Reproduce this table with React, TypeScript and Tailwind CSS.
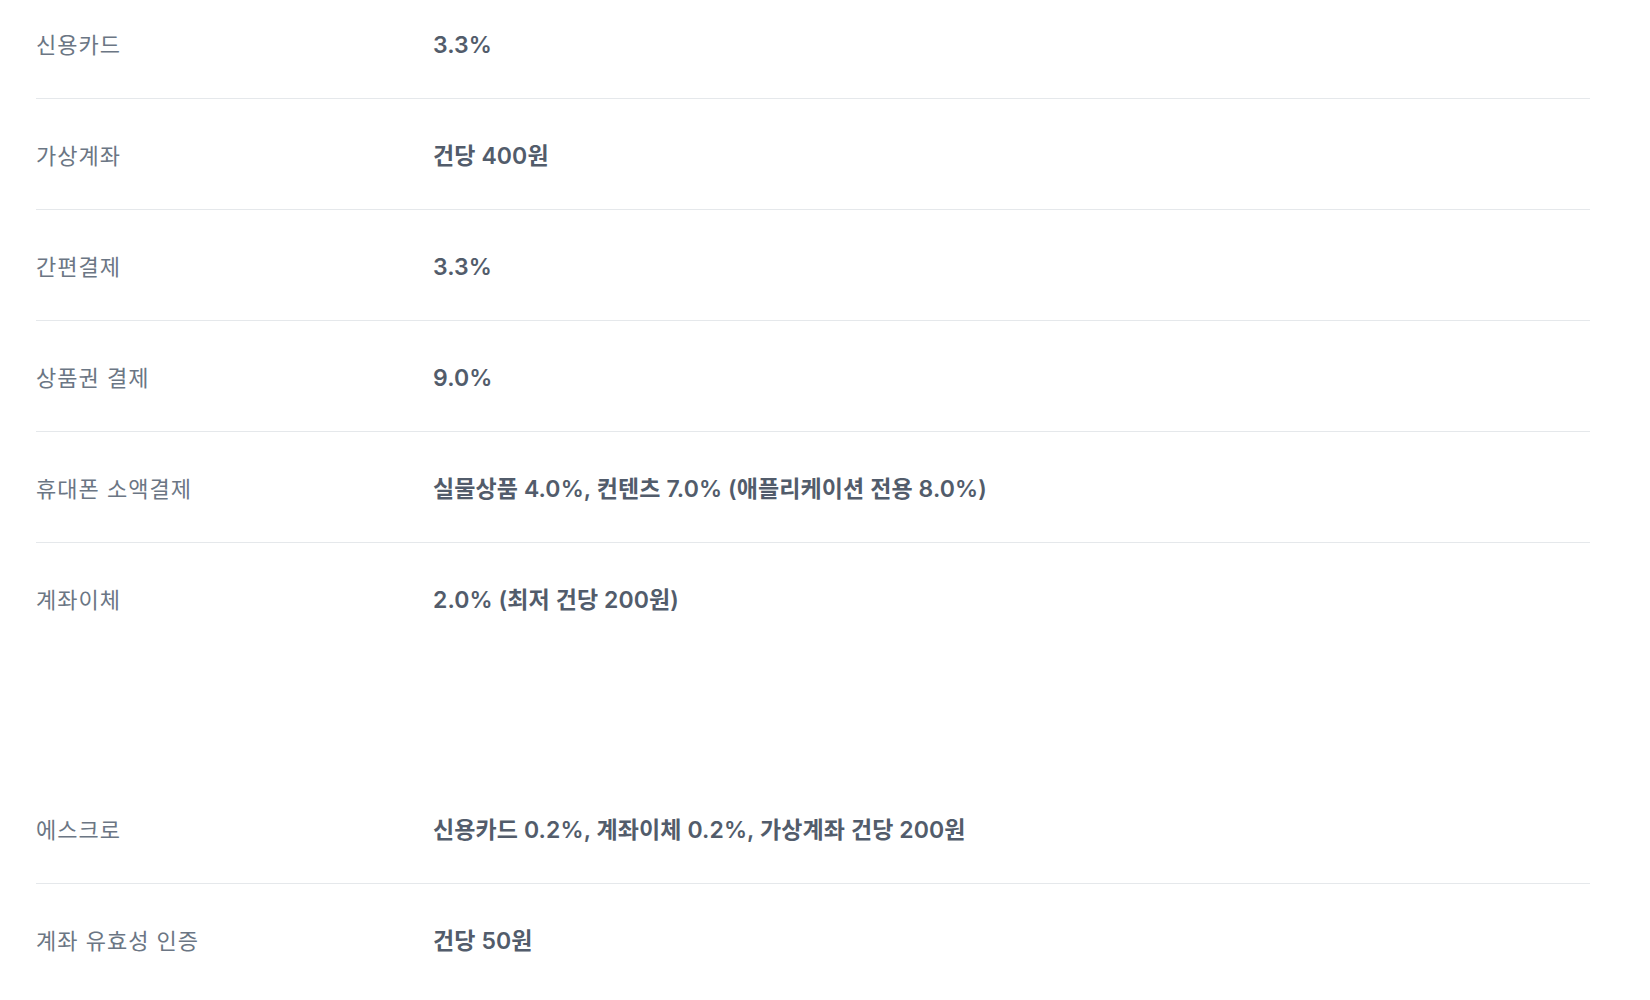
import React from "react";

const feeRows = [
  { label: "신용카드", value: "3.3%" },
  { label: "가상계좌", value: "건당 400원" },
  { label: "간편결제", value: "3.3%" },
  { label: "상품권 결제", value: "9.0%" },
  { label: "휴대폰 소액결제", value: "실물상품 4.0%, 컨텐츠 7.0% (애플리케이션 전용 8.0%)" },
  { label: "계좌이체", value: "2.0% (최저 건당 200원)" },
];

const extraRows = [
  { label: "에스크로", value: "신용카드 0.2%, 계좌이체 0.2%, 가상계좌 건당 200원" },
  { label: "계좌 유효성 인증", value: "건당 50원" },
];

const FeeTable = ({ rows }: { rows: { label: string; value: string }[] }) => {
  return (
    <div className="divide-y divide-[#e5e8eb]">
      {rows.map((row, index) => (
        <div key={index} className="flex items-center pt-[41px] pb-[37px]">
          <div className="w-[397px] shrink-0 text-[#6b7684] tracking-[1px]">{row.label}</div>
          <div className="text-[23px] font-semibold text-[#525c6b] tracking-[0.1px]">{row.value}</div>
        </div>
      ))}
    </div>
  );
};

export default function App() {
  return (
    <div
      className="min-h-screen bg-white text-[22px] leading-[32px]"
      style={{ fontFamily: 'Inter, "Noto Sans CJK KR", sans-serif' }}
    >
      <div className="ml-[36px] w-[1554px] -mt-[12px]">
        <FeeTable rows={feeRows} />
        <div className="mt-[120px]">
          <FeeTable rows={extraRows} />
        </div>
      </div>
    </div>
  );
}
